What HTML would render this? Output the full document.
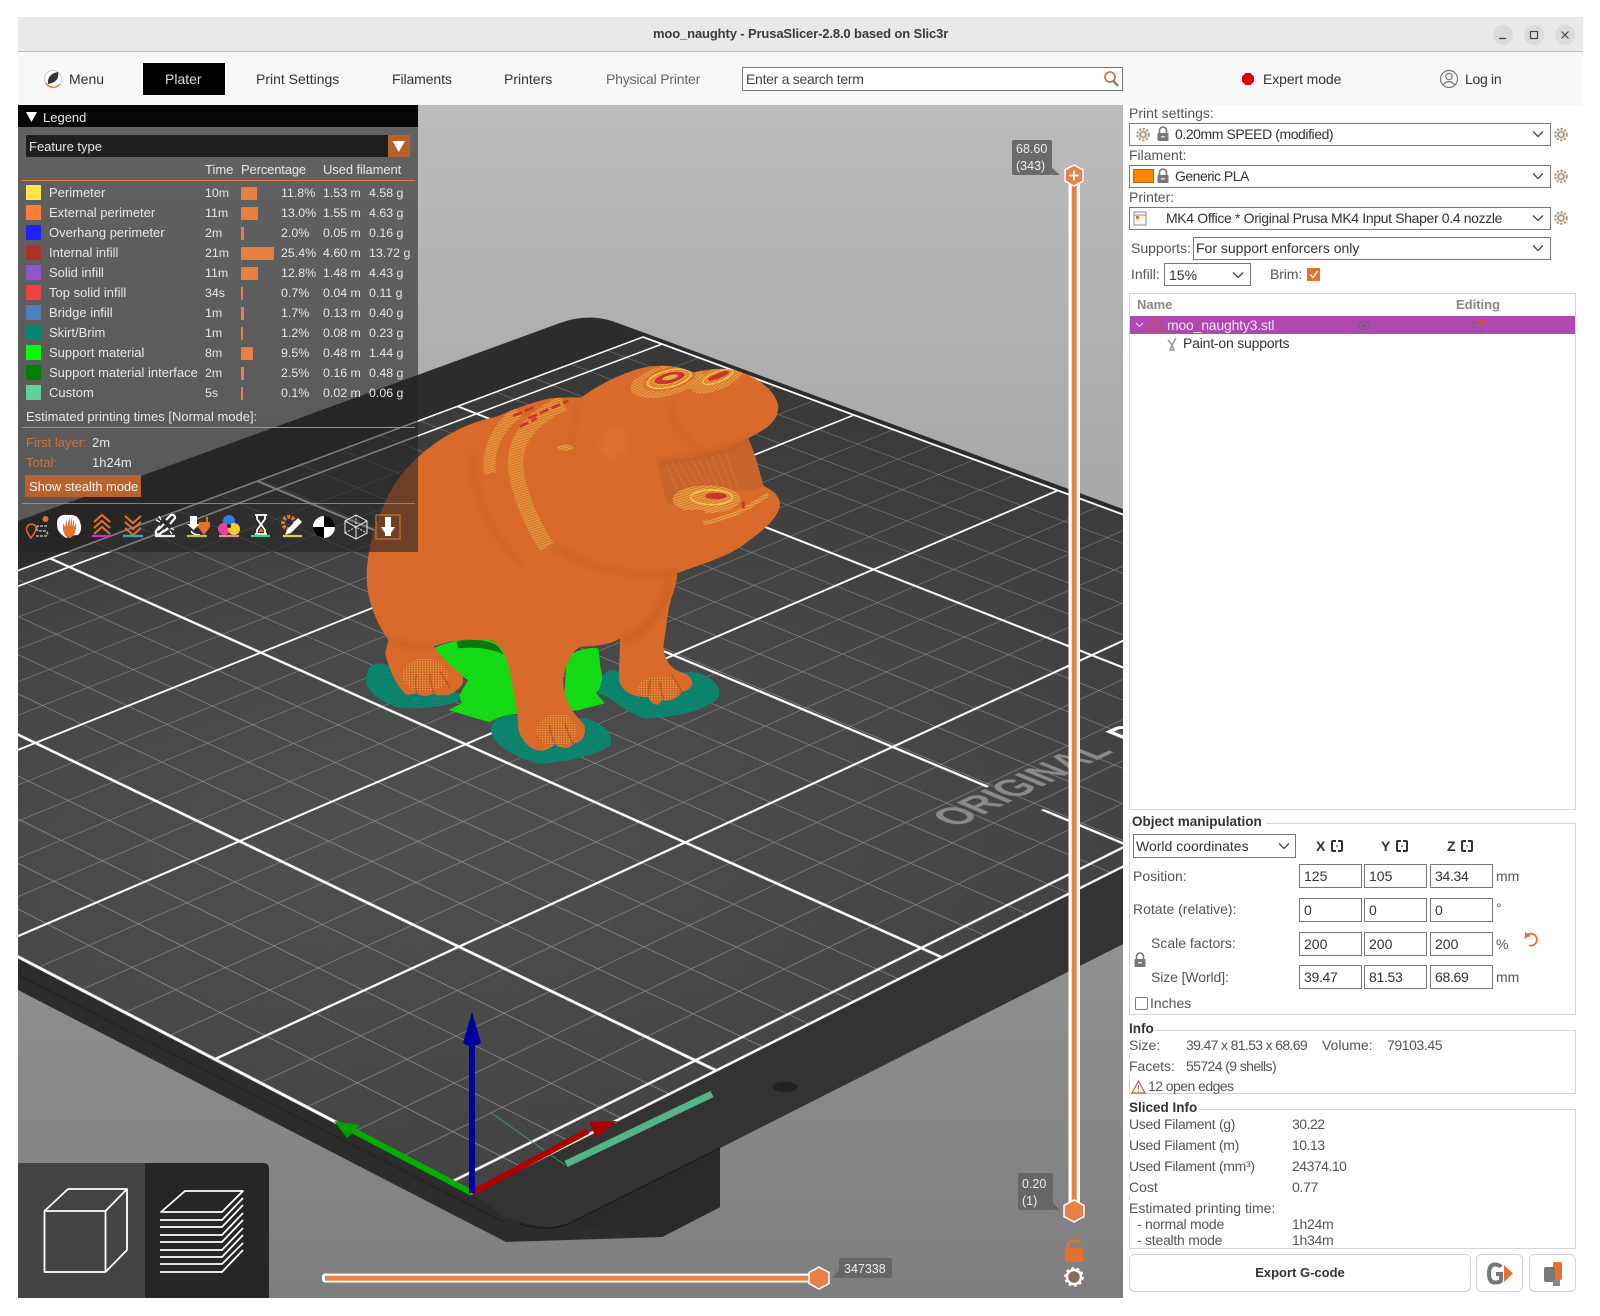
<!DOCTYPE html>
<html><head><meta charset="utf-8"><title>moo_naughty - PrusaSlicer</title>
<style>
html,body{margin:0;padding:0;width:1600px;height:1316px;background:#fff;overflow:hidden}
body{position:relative;font-family:"Liberation Sans",sans-serif;font-size:14px;color:#333}
.t{position:absolute;white-space:nowrap;line-height:16px}
.b{position:absolute;box-sizing:border-box}
.f{position:absolute;box-sizing:border-box;background:#fff;border:1px solid #777}
.l{color:#555}
#leg .t{color:#e8e8e8;font-size:13px}
#leg .t.n{font-size:12.4px}
#leg .b.sw{width:15px;height:15px;left:8px}
#leg .b.bar{background:#e8803f;height:13px;left:223px}
.g{position:absolute;border:1px solid #d4d4d4;box-sizing:border-box}
</style></head><body>

<!-- title + toolbar -->
<div class="b" style="left:18px;top:17px;width:1565px;height:35px;background:#e9e9e9;border-bottom:1px solid #bdbdbd"></div>
<div class="t" style="left:653px;top:26px;font-weight:bold;font-size:13px;letter-spacing:-.13px;color:#3a3a3a">moo_naughty - PrusaSlicer-2.8.0 based on Slic3r</div>
<div class="b" style="left:18px;top:52px;width:1565px;height:53px;background:#f8f8f8"></div>
<div class="b" style="left:143px;top:63px;width:82px;height:32px;background:#000"></div>
<div class="t" style="left:165px;top:71px;color:#ddd">Plater</div>
<div class="t" style="left:69px;top:71px">Menu</div>
<div class="t" style="left:256px;top:71px">Print Settings</div>
<div class="t" style="left:392px;top:71px;letter-spacing:-.1px">Filaments</div>
<div class="t" style="left:504px;top:71px">Printers</div>
<div class="t" style="left:606px;top:71px;color:#666;letter-spacing:-.2px">Physical Printer</div>
<div class="f" style="left:742px;top:67px;width:381px;height:24px"></div>
<div class="t" style="left:746px;top:71px;color:#444;letter-spacing:-.28px">Enter a search term</div>
<div class="t" style="left:1263px;top:71px;letter-spacing:-.1px">Expert mode</div>
<div class="t" style="left:1465px;top:71px;letter-spacing:-.3px">Log in</div>

<!-- 3D scene -->
<div class="b" style="left:18px;top:105px;width:1105px;height:1193px;overflow:hidden;background:linear-gradient(#bcbcbc,#7e7e7e)">
<div style="position:absolute;left:-18px;top:-105px;width:1600px;height:1316px">
<svg width="1600" height="1316" style="position:absolute;left:0;top:0">
 <path d="M18,521L560,323Q587,313 612,321L645,333L1123,509L1123,944L720,1148L720,1207L662,1237L506,1242L18,990Z" fill="#2c2c2c"/>
 <path d="M662,1237L720,1207L720,1180L662,1217Z" fill="#212121"/>
 <path d="M720,1148L568,1224Q548,1232 504,1217L662,1237L720,1207Z" fill="#2a2a2a"/>
 <path d="M472,1193L1123,866L1123,944L720,1148L568,1224Q548,1232 504,1217Z" fill="#333"/>
 <path d="M720,1148L568,1224Q548,1232 520,1224" fill="none" stroke="#1c1c1c" stroke-width="1.5"/>
 <path d="M18,975L504,1222" stroke="#252525" stroke-width="2" fill="none"/>
 <ellipse cx="785" cy="1087" rx="13" ry="5" fill="#222"/>
</svg>
<div style="position:absolute;left:0;top:0;width:2000px;height:2000px;transform-origin:0 0;transform:matrix3d(-0.478095,-0.16845,0,0.00008477,0.68401,-0.196445,0,0.000102495,0,0,1,0,472,1193,0,1)">
<svg width="2000" height="2000" style="display:block;overflow:visible">
 <defs>
  <radialGradient id="sf" cx="0.42" cy="0.28" r="0.85"><stop offset="0" stop-color="#505050"/><stop offset="0.55" stop-color="#444"/><stop offset="1" stop-color="#383838"/></radialGradient>
  <pattern id="thin" patternUnits="userSpaceOnUse" x="40.6" y="0" width="95.52" height="80"><path d="M0,0V80M0,0H95.52" stroke="#fff" stroke-opacity=".45" stroke-width="2.6" fill="none"/></pattern>
 </defs>
 <rect width="2000" height="2000" fill="url(#sf)"/>
 <rect width="2000" height="2000" fill="url(#thin)"/>
 <g stroke="#fff" stroke-width="5.5" fill="none">
  <path d="M0,0H2000V2000H0ZM40.6,0V2000M518.2,0V2000M995.8,0V2000M1473.4,0V2000M1951,0V2000"/>
  <path d="M0,400H2000M0,800H2000M0,1600H2000M0,1194H210M320,1194H2000"/>
 </g>
 <text transform="translate(262,1076) rotate(90)" font-family="Liberation Sans" font-weight="bold" font-size="82" fill="#8a8a8a" textLength="315" lengthAdjust="spacingAndGlyphs">ORIGINAL</text>
 <text transform="translate(262,1425) rotate(90)" font-family="Liberation Sans" font-weight="bold" font-size="82" fill="#fff" textLength="200" lengthAdjust="spacingAndGlyphs">PRUSA</text>
</svg>
</div>
<svg width="1600" height="1316" style="position:absolute;left:0;top:0">
 <defs>
  <pattern id="st" patternUnits="userSpaceOnUse" width="7" height="7" patternTransform="rotate(-18)"><rect width="7" height="7" fill="#db7430"/><rect width="7" height="3" fill="#e8ae44"/></pattern>
  <pattern id="dots" patternUnits="userSpaceOnUse" width="8" height="7"><circle cx="2" cy="2" r="1.8" fill="#eebc50"/><circle cx="6" cy="5.500" r="1.600" fill="#b7571f"/></pattern>
  <pattern id="sparse" patternUnits="userSpaceOnUse" width="9" height="9" patternTransform="rotate(-25)"><circle cx="2" cy="3" r="1.300" fill="#b9571f"/><circle cx="6" cy="7" r="1" fill="#e8a040"/></pattern>
  <pattern id="tl" patternUnits="userSpaceOnUse" width="6" height="6" patternTransform="rotate(8)"><rect width="6" height="6" fill="#0a7d68"/><rect width="6" height="1.600" fill="#0f947b"/></pattern>
  <pattern id="gr" patternUnits="userSpaceOnUse" width="8" height="8" patternTransform="rotate(-35)"><rect width="8" height="8" fill="#16e016"/><rect width="8" height="1.500" fill="#0cbc0c"/></pattern>
  <filter id="sb" x="-20%" y="-20%" width="140%" height="140%"><feGaussianBlur stdDeviation="9"/></filter>
  <clipPath id="bodyclip"><path d="M440,170C490,148 550,125 600,115C640,112 670,112 695,112C730,85 790,50 860,28C920,10 985,15 1030,38C1060,30 1100,24 1140,28C1210,40 1280,90 1285,140C1285,190 1240,210 1195,235C1215,280 1230,340 1240,375C1250,385 1285,395 1290,430C1290,470 1240,510 1200,540C1140,590 1060,610 980,640C985,650 975,680 960,730C950,770 950,800 940,860C945,900 960,930 1005,940C1040,960 1030,990 995,995C985,1020 950,1025 935,1020C930,1040 905,1040 895,1010C860,1015 820,1000 808,965C805,930 810,880 810,835C790,850 740,860 690,860C660,880 645,920 640,960C640,1020 665,1055 700,1090C715,1120 695,1150 670,1150C660,1170 625,1165 615,1150C610,1160 600,1165 580,1172C540,1175 515,1140 505,1110C505,1060 495,1010 480,940C470,880 450,850 420,840C360,835 300,840 250,860C270,885 300,915 325,935C345,950 345,975 320,990C300,1010 270,1010 250,1000C240,1010 215,1010 200,1000L170,1005C135,975 120,930 105,880L115,840C80,790 50,720 50,650C50,560 90,430 150,350C220,260 330,190 440,170Z"/></clipPath>
 </defs>
 <!-- wipe tower + axes -->
 <path d="M490,1112L565,1165" stroke="#3f8f70" stroke-width="1"/>
 <path d="M566,1164L712,1094" stroke="#53b488" stroke-width="7"/>
 <path d="M472,1193L588,1131" stroke="#b00000" stroke-width="6"/><path d="M617,1121L589,1122L596,1138Z" fill="#a80000"/>
 <path d="M472,1193L352,1130" stroke="#00b000" stroke-width="6"/><path d="M334,1121L347,1138L360,1125Z" fill="#00a000"/>
 <path d="M472,1193V1045" stroke="#00009c" stroke-width="6"/><path d="M472,1012L463,1043Q472,1049 481,1043Z" fill="#00009c"/>
 <!-- model -->
 <g transform="translate(350,360) scale(.33333)">
  <g fill="url(#tl)">
   <path d="M55,925C85,900 115,905 150,950L345,1005C330,1035 230,1050 150,1044C100,1030 35,990 50,950Z"/>
   <path d="M425,1095C450,1062 490,1060 520,1075L710,1075C760,1090 795,1125 780,1155C745,1185 650,1205 570,1212C500,1195 410,1150 425,1095Z"/>
   <path d="M745,960C770,930 795,918 815,945L1030,935C1080,945 1120,980 1105,1012C1070,1050 980,1072 885,1076C830,1060 790,1015 742,998Z"/>
  </g>
  <g fill="url(#gr)">
   <path d="M250,865C300,840 370,835 420,840C450,855 465,870 475,900L510,1062C470,1062 440,1072 420,1087L295,1050L335,1030L328,1005L355,960L330,945Z"/>
   <path d="M650,890C680,870 720,860 745,865L752,925C762,960 752,985 738,998L764,1030L680,1052L640,1050Z"/>
  </g>
  <path d="M320,845C360,835 420,838 445,860L462,885C430,865 370,860 325,865Z" fill="#0a780a"/>
  <path d="M440,170C490,148 550,125 600,115C640,112 670,112 695,112C730,85 790,50 860,28C920,10 985,15 1030,38C1060,30 1100,24 1140,28C1210,40 1280,90 1285,140C1285,190 1240,210 1195,235C1215,280 1230,340 1240,375C1250,385 1285,395 1290,430C1290,470 1240,510 1200,540C1140,590 1060,610 980,640C985,650 975,680 960,730C950,770 950,800 940,860C945,900 960,930 1005,940C1040,960 1030,990 995,995C985,1020 950,1025 935,1020C930,1040 905,1040 895,1010C860,1015 820,1000 808,965C805,930 810,880 810,835C790,850 740,860 690,860C660,880 645,920 640,960C640,1020 665,1055 700,1090C715,1120 695,1150 670,1150C660,1170 625,1165 615,1150C610,1160 600,1165 580,1172C540,1175 515,1140 505,1110C505,1060 495,1010 480,940C470,880 450,850 420,840C360,835 300,840 250,860C270,885 300,915 325,935C345,950 345,975 320,990C300,1010 270,1010 250,1000C240,1010 215,1010 200,1000L170,1005C135,975 120,930 105,880L115,840C80,790 50,720 50,650C50,560 90,430 150,350C220,260 330,190 440,170Z" fill="#d96a2c"/>
  <g clip-path="url(#bodyclip)">
   <!-- soft shading -->
   <g fill="none" stroke="#b8551f" filter="url(#sb)" opacity=".3">
    <path d="M370,280C365,420 430,530 520,620" stroke-width="16"/>
    <path d="M610,560C760,650 880,650 985,635" stroke-width="20"/>
    <path d="M960,650C940,760 880,830 810,840" stroke-width="30"/>
    <path d="M960,120C950,170 990,230 1060,270" stroke-width="12"/>
    <path d="M590,310C700,270 640,210 700,120" stroke-width="10"/>
    <path d="M110,840C160,860 220,860 260,855" stroke-width="20"/>
   </g>
   <!-- stippled wear on sides -->
   <path d="M430,300L590,300L650,580L500,590Z" fill="url(#sparse)" opacity=".4"/>
   <path d="M760,320L950,340L980,520L820,420Z" fill="url(#sparse)" opacity=".25"/>
   <!-- neck bands -->
   <g fill="none" stroke="url(#st)" opacity=".85">
    <path d="M505,155C450,195 410,260 420,340" stroke-width="36"/>
    <path d="M640,130C560,165 490,230 497,320C505,400 540,480 590,560" stroke-width="46"/>
   </g>
   <path d="M490,168L555,140M535,175L655,122M510,200L560,175" stroke="#c9352b" stroke-width="8" stroke-dasharray="28 10" fill="none"/>
   <!-- ear / eye -->
   <path d="M590,290C610,245 660,235 680,262C670,300 625,325 590,320Z" fill="#d96a2c"/>
   <ellipse cx="645" cy="263" rx="24" ry="9" fill="url(#st)"/>
   <ellipse cx="790" cy="250" rx="44" ry="44" fill="#dd6f31" filter="url(#sb)"/>
   <!-- head contours -->
   <g transform="rotate(-14 950 60)" fill="none">
    <ellipse cx="950" cy="62" rx="112" ry="46" fill="url(#st)" stroke="none" opacity=".9"/>
    <ellipse cx="958" cy="58" rx="78" ry="30" stroke="#d8702e" stroke-width="5"/>
    <ellipse cx="958" cy="58" rx="66" ry="25" stroke="#f0c44e" stroke-width="4"/>
    <ellipse cx="960" cy="56" rx="48" ry="17" fill="#c9352b" stroke="#f0c44e" stroke-width="2"/>
    <ellipse cx="962" cy="55" rx="24" ry="7" fill="#e8ad42"/>
   </g>
   <g transform="rotate(-22 1100 55)" fill="none">
    <ellipse cx="1100" cy="58" rx="84" ry="32" fill="url(#st)" opacity=".9"/>
    <ellipse cx="1105" cy="52" rx="48" ry="15" stroke="#f0c44e" stroke-width="4"/>
    <ellipse cx="1108" cy="50" rx="34" ry="8" fill="#c9352b"/>
   </g>
   <!-- mouth -->
   <path d="M925,305C1000,302 1110,285 1195,235C1210,280 1225,340 1242,378C1195,405 1120,395 1060,378C1005,380 972,410 958,445C935,385 925,340 925,305Z" fill="#c9642c"/>
   <g stroke="#dc8a48" stroke-width="3" opacity=".45">
    <path d="M945,305L985,395M965,305L1005,380M985,303L1025,375M1005,301L1045,372M1025,299L1065,372M1045,296L1085,378M1065,292L1105,382M1085,286L1125,385M1105,280L1145,388M1125,272L1165,388"/>
   </g>
   <path d="M925,303C1000,302 1110,285 1195,235" fill="none" stroke="#a94c1c" stroke-width="10" filter="url(#sb)" opacity=".5"/>
   <!-- lower jaw -->
   <path d="M958,440C985,385 1050,372 1110,385C1150,395 1200,400 1242,378C1262,395 1270,405 1262,418C1230,450 1130,490 1040,492C1000,500 980,500 965,490Z" fill="#d96a2c"/>
   <ellipse cx="1070" cy="418" rx="102" ry="42" fill="url(#st)"/>
   <ellipse cx="1085" cy="412" rx="62" ry="22" fill="none" stroke="#f0c44e" stroke-width="5"/>
   <ellipse cx="1098" cy="408" rx="32" ry="10" fill="#c9352b"/>
   <path d="M985,462C1000,445 1040,450 1060,450L1080,480C1040,490 1000,490 985,490Z" fill="#d96a2c"/>
   <path d="M1060,488C1120,480 1190,450 1255,402" stroke="url(#st)" stroke-width="14" fill="none"/>
   <path d="M1180,425V445" stroke="#c9352b" stroke-width="8"/>
   <!-- feet -->
   <ellipse cx="225" cy="945" rx="68" ry="50" fill="url(#dots)"/>
   <ellipse cx="620" cy="1110" rx="60" ry="50" fill="url(#dots)"/>
   <ellipse cx="925" cy="985" rx="62" ry="38" fill="url(#dots)"/>
   <g stroke="#a94c1c" stroke-width="4" fill="none" opacity=".7">
    <path d="M200,1000C195,980 195,960 200,945M252,1000C245,980 240,960 240,940M300,985C290,965 280,950 270,935"/>
    <path d="M615,1150C605,1130 600,1115 600,1095M668,1150C658,1125 650,1110 645,1090"/>
    <path d="M895,1010C895,990 900,975 900,960M940,1018C935,995 930,980 930,965M995,995C985,975 975,960 965,945"/>
   </g>
  </g>
 </g>
</svg>
</div>
</div>

<!-- Legend -->
<div id="leg" class="b" style="left:18px;top:127px;width:400px;height:425px;background:rgba(34,34,34,.59)">
 <div class="b" style="left:8px;top:8px;width:384px;height:22px;background:#1f1f1f"></div>
 <div class="b" style="left:370px;top:8px;width:22px;height:22px;background:#b5602f"></div>
 <div class="t" style="left:11px;top:12px">Feature type</div>
 <div class="t" style="left:187px;top:35px">Time</div><div class="t" style="left:223px;top:35px;letter-spacing:-.15px">Percentage</div><div class="t" style="left:305px;top:35px;letter-spacing:-.1px">Used filament</div>
 <div class="b" style="left:4px;top:53px;width:393px;height:1px;background:#e8803f"></div>

 <div class="b sw" style="top:58px;background:#ffe64d"></div><div class="t" style="left:31px;top:58px">Perimeter</div><div class="t n" style="left:187px;top:58px">10m</div><div class="b bar" style="top:60px;width:16px"></div><div class="t n" style="left:263px;top:58px">11.8%</div><div class="t n" style="left:305px;top:58px">1.53 m</div><div class="t n" style="left:351px;top:58px">4.58 g</div>
 <div class="b sw" style="top:78px;background:#ff7d38"></div><div class="t" style="left:31px;top:78px">External perimeter</div><div class="t n" style="left:187px;top:78px">11m</div><div class="b bar" style="top:80px;width:17px"></div><div class="t n" style="left:263px;top:78px">13.0%</div><div class="t n" style="left:305px;top:78px">1.55 m</div><div class="t n" style="left:351px;top:78px">4.63 g</div>
 <div class="b sw" style="top:98px;background:#1f1fff"></div><div class="t" style="left:31px;top:98px">Overhang perimeter</div><div class="t n" style="left:187px;top:98px">2m</div><div class="b bar" style="top:100px;width:3px"></div><div class="t n" style="left:263px;top:98px">2.0%</div><div class="t n" style="left:305px;top:98px">0.05 m</div><div class="t n" style="left:351px;top:98px">0.16 g</div>
 <div class="b sw" style="top:118px;background:#b03029"></div><div class="t" style="left:31px;top:118px">Internal infill</div><div class="t n" style="left:187px;top:118px">21m</div><div class="b bar" style="top:120px;width:33px"></div><div class="t n" style="left:263px;top:118px">25.4%</div><div class="t n" style="left:305px;top:118px">4.60 m</div><div class="t n" style="left:351px;top:118px">13.72 g</div>
 <div class="b sw" style="top:138px;background:#9654cc"></div><div class="t" style="left:31px;top:138px">Solid infill</div><div class="t n" style="left:187px;top:138px">11m</div><div class="b bar" style="top:140px;width:17px"></div><div class="t n" style="left:263px;top:138px">12.8%</div><div class="t n" style="left:305px;top:138px">1.48 m</div><div class="t n" style="left:351px;top:138px">4.43 g</div>
 <div class="b sw" style="top:158px;background:#f04040"></div><div class="t" style="left:31px;top:158px">Top solid infill</div><div class="t n" style="left:187px;top:158px">34s</div><div class="b bar" style="top:160px;width:2px"></div><div class="t n" style="left:263px;top:158px">0.7%</div><div class="t n" style="left:305px;top:158px">0.04 m</div><div class="t n" style="left:351px;top:158px">0.11 g</div>
 <div class="b sw" style="top:178px;background:#4d80ba"></div><div class="t" style="left:31px;top:178px">Bridge infill</div><div class="t n" style="left:187px;top:178px">1m</div><div class="b bar" style="top:180px;width:3px"></div><div class="t n" style="left:263px;top:178px">1.7%</div><div class="t n" style="left:305px;top:178px">0.13 m</div><div class="t n" style="left:351px;top:178px">0.40 g</div>
 <div class="b sw" style="top:198px;background:#00876e"></div><div class="t" style="left:31px;top:198px">Skirt/Brim</div><div class="t n" style="left:187px;top:198px">1m</div><div class="b bar" style="top:200px;width:2px"></div><div class="t n" style="left:263px;top:198px">1.2%</div><div class="t n" style="left:305px;top:198px">0.08 m</div><div class="t n" style="left:351px;top:198px">0.23 g</div>
 <div class="b sw" style="top:218px;background:#00ff00"></div><div class="t" style="left:31px;top:218px">Support material</div><div class="t n" style="left:187px;top:218px">8m</div><div class="b bar" style="top:220px;width:12px"></div><div class="t n" style="left:263px;top:218px">9.5%</div><div class="t n" style="left:305px;top:218px">0.48 m</div><div class="t n" style="left:351px;top:218px">1.44 g</div>
 <div class="b sw" style="top:238px;background:#008000"></div><div class="t" style="left:31px;top:238px">Support material interface</div><div class="t n" style="left:187px;top:238px">2m</div><div class="b bar" style="top:240px;width:3px"></div><div class="t n" style="left:263px;top:238px">2.5%</div><div class="t n" style="left:305px;top:238px">0.16 m</div><div class="t n" style="left:351px;top:238px">0.48 g</div>
 <div class="b sw" style="top:258px;background:#5ed29a"></div><div class="t" style="left:31px;top:258px">Custom</div><div class="t n" style="left:187px;top:258px">5s</div><div class="b bar" style="top:260px;width:2px"></div><div class="t n" style="left:263px;top:258px">0.1%</div><div class="t n" style="left:305px;top:258px">0.02 m</div><div class="t n" style="left:351px;top:258px">0.06 g</div>

 <div class="t" style="left:8px;top:282px">Estimated printing times [Normal mode]:</div>
 <div class="b" style="left:4px;top:300px;width:393px;height:1px;background:#e8803f"></div>
 <div class="t" style="left:8px;top:308px;color:#c8743e">First layer:</div><div class="t" style="left:74px;top:308px">2m</div>
 <div class="t" style="left:8px;top:328px;color:#c8743e">Total:</div><div class="t" style="left:74px;top:328px">1h24m</div>
 <div class="b" style="left:7px;top:348px;width:116px;height:22px;background:#b8622f"></div>
 <div class="t" style="left:11px;top:352px;color:#f2f2f2;letter-spacing:-.08px">Show stealth mode</div>
 <div class="b" style="left:4px;top:376px;width:393px;height:1px;background:#e8803f;opacity:.8"></div>
</div>
<div class="b" style="left:18px;top:105px;width:400px;height:22px;background:#060606"></div>
<div class="t" style="left:43px;top:110px;color:#e8e8e8;font-size:13px">Legend</div>

<!-- Right panel text -->
<div class="b" style="left:1123px;top:105px;width:459px;height:1193px;background:#fff;z-index:-1"></div>
<div class="t l" style="left:1129px;top:105px">Print settings:</div>
<div class="f" style="left:1129px;top:123px;width:422px;height:23px"></div>
<div class="t" style="left:1175px;top:126px;letter-spacing:-.43px">0.20mm SPEED (modified)</div>
<div class="t l" style="left:1129px;top:147px">Filament:</div>
<div class="f" style="left:1129px;top:165px;width:422px;height:23px"></div>
<div class="b" style="left:1133px;top:169px;width:21px;height:14px;background:#ff8400;border:1px solid #a86a20"></div>
<div class="t" style="left:1175px;top:168px;letter-spacing:-.5px">Generic PLA</div>
<div class="t l" style="left:1129px;top:189px">Printer:</div>
<div class="f" style="left:1129px;top:207px;width:422px;height:23px"></div>
<div class="t" style="left:1166px;top:210px;letter-spacing:-.35px">MK4 Office * Original Prusa MK4 Input Shaper 0.4 nozzle</div>
<div class="t l" style="left:1131px;top:240px">Supports:</div>
<div class="f" style="left:1193px;top:237px;width:358px;height:23px"></div>
<div class="t" style="left:1196px;top:240px">For support enforcers only</div>
<div class="t l" style="left:1131px;top:266px">Infill:</div>
<div class="f" style="left:1164px;top:263px;width:87px;height:23px"></div>
<div class="t" style="left:1169px;top:267px">15%</div>
<div class="t l" style="left:1270px;top:266px;letter-spacing:-.1px">Brim:</div>
<div class="b" style="left:1307px;top:268px;width:13px;height:13px;background:#e8702a"></div>

<div class="g" style="left:1129px;top:293px;width:447px;height:517px"></div>
<div class="t" style="left:1137px;top:297px;color:#888;font-weight:bold;font-size:13px">Name</div>
<div class="t" style="left:1456px;top:297px;color:#888;font-weight:bold;font-size:13px">Editing</div>
<div class="b" style="left:1130px;top:316px;width:445px;height:18px;background:#b048b0"></div>
<div class="t" style="left:1167px;top:317px;color:#f4e4f4;letter-spacing:-.2px">moo_naughty3.stl</div>
<div class="t" style="left:1183px;top:335px;letter-spacing:-.2px">Paint-on supports</div>

<div class="g" style="left:1129px;top:823px;width:447px;height:192px"></div>
<div class="t" style="left:1132px;top:814px;font-weight:bold;font-size:13.5px;background:#fff;padding-right:4px">Object manipulation</div>
<div class="f" style="left:1133px;top:834px;width:163px;height:24px"></div>
<div class="t" style="left:1136px;top:838px">World coordinates</div>
<div class="t" style="left:1316px;top:838px;font-weight:bold">X</div><div class="t" style="left:1381px;top:838px;font-weight:bold">Y</div><div class="t" style="left:1447px;top:838px;font-weight:bold">Z</div>
<div class="t l" style="left:1133px;top:868px">Position:</div>
<div class="f" style="left:1299px;top:864px;width:63px;height:24px"></div><div class="f" style="left:1364px;top:864px;width:63px;height:24px"></div><div class="f" style="left:1430px;top:864px;width:63px;height:24px"></div>
<div class="t" style="left:1304px;top:868px">125</div><div class="t" style="left:1369px;top:868px">105</div><div class="t" style="left:1435px;top:868px;letter-spacing:-.3px">34.34</div><div class="t l" style="left:1496px;top:868px">mm</div>
<div class="t l" style="left:1133px;top:901px">Rotate (relative):</div>
<div class="f" style="left:1299px;top:898px;width:63px;height:24px"></div><div class="f" style="left:1364px;top:898px;width:63px;height:24px"></div><div class="f" style="left:1430px;top:898px;width:63px;height:24px"></div>
<div class="t" style="left:1304px;top:902px">0</div><div class="t" style="left:1369px;top:902px">0</div><div class="t" style="left:1435px;top:902px">0</div><div class="t l" style="left:1496px;top:900px">°</div>
<div class="t l" style="left:1151px;top:935px">Scale factors:</div>
<div class="f" style="left:1299px;top:932px;width:63px;height:24px"></div><div class="f" style="left:1364px;top:932px;width:63px;height:24px"></div><div class="f" style="left:1430px;top:932px;width:63px;height:24px"></div>
<div class="t" style="left:1304px;top:936px">200</div><div class="t" style="left:1369px;top:936px">200</div><div class="t" style="left:1435px;top:936px">200</div><div class="t l" style="left:1496px;top:936px">%</div>
<div class="t l" style="left:1151px;top:969px;letter-spacing:-.1px">Size [World]:</div>
<div class="f" style="left:1299px;top:965px;width:63px;height:24px"></div><div class="f" style="left:1364px;top:965px;width:63px;height:24px"></div><div class="f" style="left:1430px;top:965px;width:63px;height:24px"></div>
<div class="t" style="left:1304px;top:969px;letter-spacing:-.3px">39.47</div><div class="t" style="left:1369px;top:969px;letter-spacing:-.3px">81.53</div><div class="t" style="left:1435px;top:969px;letter-spacing:-.3px">68.69</div><div class="t l" style="left:1496px;top:969px">mm</div>
<div class="b" style="left:1135px;top:997px;width:13px;height:13px;border:1px solid #777;border-radius:2px"></div>
<div class="t l" style="left:1150px;top:995px">Inches</div>

<div class="g" style="left:1129px;top:1030px;width:447px;height:64px"></div>
<div class="t" style="left:1129px;top:1021px;font-weight:bold;font-size:13.5px;background:#fff;padding-right:2px">Info</div>
<div class="t l" style="left:1129px;top:1037px;background:#fff">Size:</div><div class="t l" style="left:1186px;top:1037px;letter-spacing:-.65px">39.47 x 81.53 x 68.69</div><div class="t l" style="left:1322px;top:1037px">Volume:</div><div class="t l" style="left:1387px;top:1037px;letter-spacing:-.4px">79103.45</div>
<div class="t l" style="left:1129px;top:1058px;background:#fff">Facets:</div><div class="t l" style="left:1186px;top:1058px;letter-spacing:-.6px">55724 (9 shells)</div>
<div class="t l" style="left:1148px;top:1078px;letter-spacing:-.55px">12 open edges</div>

<div class="g" style="left:1129px;top:1109px;width:447px;height:140px"></div>
<div class="t" style="left:1129px;top:1100px;font-weight:bold;font-size:13.5px;background:#fff;padding-right:2px">Sliced Info</div>
<div class="t l" style="left:1129px;top:1116px;background:#fff;letter-spacing:-.3px">Used Filament (g)</div><div class="t l" style="left:1292px;top:1116px;letter-spacing:-.5px">30.22</div>
<div class="t l" style="left:1129px;top:1137px;background:#fff;letter-spacing:-.3px">Used Filament (m)</div><div class="t l" style="left:1292px;top:1137px;letter-spacing:-.5px">10.13</div>
<div class="t l" style="left:1129px;top:1158px;background:#fff;letter-spacing:-.3px">Used Filament (mm³)</div><div class="t l" style="left:1292px;top:1158px;letter-spacing:-.5px">24374.10</div>
<div class="t l" style="left:1129px;top:1179px;background:#fff">Cost</div><div class="t l" style="left:1292px;top:1179px;letter-spacing:-.3px">0.77</div>
<div class="t l" style="left:1129px;top:1200px;background:#fff">Estimated printing time:</div>
<div class="t l" style="left:1137px;top:1216px;letter-spacing:-.25px">- normal mode</div><div class="t l" style="left:1292px;top:1216px;letter-spacing:-.3px">1h24m</div>
<div class="t l" style="left:1137px;top:1232px;letter-spacing:-.25px">- stealth mode</div><div class="t l" style="left:1292px;top:1232px;letter-spacing:-.3px">1h34m</div>

<div class="b" style="left:1129px;top:1254px;width:342px;height:38px;border:1px solid #d2d2d2;border-radius:6px"></div>
<div class="t" style="left:1129px;top:1265px;width:342px;text-align:center;font-weight:bold;font-size:13px;color:#333">Export G-code</div>
<div class="b" style="left:1476px;top:1254px;width:47px;height:38px;border:1px solid #d2d2d2;border-radius:6px"></div>
<div class="b" style="left:1529px;top:1254px;width:47px;height:38px;border:1px solid #d2d2d2;border-radius:6px"></div>

<!-- tooltip labels -->
<div class="b" style="left:1012px;top:140px;width:40px;height:35px;background:#6a6a6a;border-radius:2px"></div>
<div class="t" style="left:1016px;top:141px;color:#eee;font-size:12.5px">68.60</div><div class="t" style="left:1016px;top:158px;color:#eee;font-size:12.5px">(343)</div>
<div class="b" style="left:1018px;top:1173px;width:35px;height:37px;background:#666;border-radius:2px"></div>
<div class="t" style="left:1022px;top:1176px;color:#eee;font-size:12.5px">0.20</div><div class="t" style="left:1022px;top:1193px;color:#eee;font-size:12.5px">(1)</div>
<div class="b" style="left:839px;top:1258px;width:53px;height:20px;background:#666;border-radius:2px"></div>
<div class="t" style="left:844px;top:1261px;color:#eee;font-size:12.5px">347338</div>

<!-- overlay icons -->
<svg width="1600" height="1316" style="position:absolute;left:0;top:0;pointer-events:none">
 <defs>
  <g id="gear"><circle r="5.800" fill="none" stroke="#a8917f" stroke-width="1.800" stroke-dasharray="2.400 1.400"/><circle r="4.200" fill="#c2b3a6"/><circle r="2.500" fill="#eee" stroke="#9a8a7c" stroke-width=".8"/></g>
  <g id="lock"><rect x="-5.500" y="-1" width="11" height="8" rx="1" fill="#777"/><path d="M-3.500,-1V-3.500A3.500,3.500 0 0 1 3.500,-3.500V-1" fill="none" stroke="#777" stroke-width="1.600"/><rect x="-2" y="2" width="4" height="1.500" fill="#ddd"/></g>
  <path id="chev" d="M-5,-2.500L0,2.500L5,-2.500" fill="none" stroke="#444" stroke-width="1.300"/>
  <g id="dim"><rect x="-5" y="-5" width="10" height="10" rx="1" fill="none" stroke="#333" stroke-width="2"/><path d="M0,-7V-3.500M0,3.500V7" stroke="#fff" stroke-width="2"/><circle r="1" fill="#777"/></g>
 </defs>
 <!-- window buttons -->
 <circle cx="1503" cy="35" r="10" fill="#dcdcdc"/><circle cx="1534" cy="35" r="10" fill="#dcdcdc"/><circle cx="1565" cy="35" r="10" fill="#dcdcdc"/>
 <path d="M1499,38.500h7" stroke="#444" stroke-width="1.300"/><rect x="1530.500" y="31.500" width="7" height="7" fill="none" stroke="#444" stroke-width="1.200"/><path d="M1561.500,31.500l7,7m0,-7l-7,7" stroke="#444" stroke-width="1.200"/>
 <!-- menu icon -->
 <circle cx="53" cy="79" r="8.500" fill="#fff" stroke="#ccc"/><path d="M48,84Q47,74 58,72Q60,82 48,84Z" fill="#333"/><path d="M46,83A8.500,8.500 0 0 0 60,84" fill="none" stroke="#e8702a" stroke-width="1.300"/>
 <!-- search -->
 <circle cx="1110" cy="77" r="5" fill="none" stroke="#d06a30" stroke-width="1.600"/><path d="M1113.500,81L1118,86" stroke="#777" stroke-width="2.200"/>
 <!-- expert -->
 <polygon points="1245.500,73 1250.500,73 1254,76.500 1254,81.500 1250.500,85 1245.500,85 1242,81.500 1242,76.500" fill="#e30000"/>
 <!-- login -->
 <circle cx="1449" cy="79" r="8.500" fill="none" stroke="#777" stroke-width="1.200"/><circle cx="1449" cy="76.500" r="3.200" fill="none" stroke="#777" stroke-width="1.200"/><path d="M1443,85Q1449,78 1455,85" fill="none" stroke="#777" stroke-width="1.200"/>
 <!-- legend triangles -->
 <path d="M26,112H37L31.500,122Z" fill="#fff"/>
 <path d="M392.500,141H405L398.700,152Z" fill="#fff"/>
 <!-- legend icons -->
 <g fill="none">
  <path d="M31,538Q25,530 27,527A5,5 0 0 1 36,527Q37,530 31,538Z" stroke="#e8702a" stroke-width="1.500"/><circle cx="45.500" cy="519" r="3" fill="#e8702a"/>
  <path d="M36,536H46Q49,533 46,531H38Q35,528 38,526H48" stroke="#aaa" stroke-width="1.600" stroke-dasharray="3 1"/>
  <path d="M58,518Q62,514 68,515Q78,514 80,522Q83,530 78,535Q72,535 66,538Q60,534 58,530Q56,524 58,518Z" fill="#fff"/>
  <path d="M63,523V530Q65,538 70,538Q75,536 76,528V523L74,527V518L72,527V516L70,527V517L67,527V519L65,527Z" fill="#e8702a"/>
  <path d="M94,522L102,515L110,522M94,528L102,521L110,528M94,534L102,527L110,534" stroke="#e8702a" stroke-width="2"/>
  <path d="M125,516L133,523L141,516M125,522L133,529L141,522M125,528L133,535L141,528" stroke="#e8702a" stroke-width="2"/>
  <path d="M158,530L164,524M166,520L171,515Q175,514 175,518L170,524M160,526L156,531Q155,535 159,535L164,530M168,528L163,532" stroke="#fff" stroke-width="2.200"/>
  <path d="M159,516l2,4M174,530l-3,-2M172,534l-2,-3M156,520l4,2" stroke="#fff" stroke-width="1.300"/>
 </g>
 <path d="M190,516H197V524H200L193.500,530L187,524H190Z" fill="#fff"/><path d="M199,522H206V517H208V522L210,522V527L204,535L198,527Z" fill="#e8702a"/>
 <path d="M191,531Q193,535 200,535" fill="none" stroke="#fff" stroke-width="1.500"/>
 <circle cx="229" cy="521" r="6" fill="#2f7fe0"/><circle cx="224" cy="529" r="6" fill="#e83fa0"/><circle cx="234" cy="529" r="6" fill="#eed030"/><circle cx="229" cy="526" r="2" fill="#222"/>
 <path d="M255,515H267M255,534H267M257,515V519L261,524.500L257,530V534M265,515V519L261,524.500L265,530V534" fill="none" stroke="#fff" stroke-width="1.800"/>
 <path d="M258,532H264L261,528Z" fill="#e8702a"/>
 <circle cx="289" cy="523" r="6" fill="none" stroke="#e8702a" stroke-width="4" stroke-dasharray="3 1.400"/>
 <path d="M285,535L287,530L298,518L302,522L291,533Z" fill="#fff"/>
 <circle cx="324" cy="527" r="11" fill="#fff"/><path d="M324,527V516A11,11 0 0 1 335,527ZM324,527V538A11,11 0 0 1 313,527Z" fill="#000"/>
 <g fill="none" stroke="#ddd" stroke-width="1.100"><path d="M356,515L367,521V533L356,539L345,533V521Z"/><path d="M345,521L356,527L367,521M356,527V539"/><path d="M345,533L356,527L367,533M356,515V527" stroke-dasharray="2 1.500"/></g>
 <rect x="376" y="515" width="24" height="24" fill="none" stroke="#d9803f" stroke-width="1"/>
 <path d="M385,517H391V527H395L391,533V536H385V533L381,527H385Z" fill="#fff"/>
 <g stroke-width="2.200">
  <path d="M92,536H111" stroke="#d030d0"/><path d="M123,536H143" stroke="#3aa3c8"/><path d="M155,536H175" stroke="#eee"/><path d="M187,536H207" stroke="#c5b94a"/><path d="M219,536H239" stroke="#e09090"/><path d="M251,536H270" stroke="#3fd07f"/><path d="M283,536H302" stroke="#e5d040"/>
 </g>
 <!-- bottom-left view switcher -->
 <path d="M18,1163H145V1298H18Z" fill="#444"/><path d="M145,1163H263Q269,1163 269,1169V1298H145Z" fill="#262626"/>
 <g fill="none" stroke="#fff" stroke-width="1.800" stroke-linejoin="round">
  <path d="M44.500,1211H105.500V1272H44.500ZM44.500,1211L68,1189H127L105.500,1211M127,1189V1250L105.500,1272"/>
  <path d="M161,1212L185,1191H243L222,1212Z"/>
  <path d="M160,1220H222L243,1198M160,1227H222L243,1205M160,1235H222L243,1213M160,1242H222L243,1220M160,1250H222L243,1228M160,1257H222L243,1235M160,1264H222L243,1243M160,1272H222L243,1250"/>
 </g>
 <!-- sliders -->
 <rect x="1068.500" y="175" width="11.500" height="1036" rx="3" fill="#fff"/><rect x="1071.700" y="175" width="5" height="1036" fill="#e8804a"/>
 <rect x="322" y="1273.500" width="497" height="9" rx="3" fill="#fff"/><rect x="325" y="1275.700" width="494" height="5" fill="#e8804a"/>
 <polygon points="1074,165 1083,170 1083,181 1074,186 1065,181 1065,170" fill="#e8804a" stroke="#fff" stroke-width="1.500"/><path d="M1074,170.500V180.500M1069,175.500H1079" stroke="#fff" stroke-width="1.800"/>
 <polygon points="1074,1200 1084,1205.500 1084,1216.500 1074,1222 1064,1216.500 1064,1205.500" fill="#e8804a" stroke="#fff" stroke-width="1.500"/>
 <polygon points="819,1267 829,1272.500 829,1283.500 819,1289 809,1283.500 809,1272.500" fill="#e8804a" stroke="#fff" stroke-width="1.500"/>
 <path d="M1052,175L1060,175L1052,168Z" fill="#6a6a6a"/><path d="M1053,1210H1060L1053,1203Z" fill="#666"/><path d="M839,1270L832,1278H839Z" fill="#666"/>
 <path d="M1066,1249H1082V1261H1066Z" fill="#e8702a" stroke="#e8702a" stroke-width="1.800"/><path d="M1068,1249V1244Q1074,1238 1081,1243" fill="none" stroke="#e8702a" stroke-width="2.500"/><circle cx="1074" cy="1254.500" r="1.500" fill="#888"/>
 <circle cx="1074" cy="1277" r="7" fill="#8a6a5a" stroke="#fff" stroke-width="2.500"/><circle cx="1074" cy="1277" r="9" fill="none" stroke="#fff" stroke-width="1.500" stroke-dasharray="3 2.600"/>
 <!-- combo decorations -->
 <use href="#gear" x="1143" y="134.500"/><use href="#lock" x="1163" y="134"/><use href="#lock" x="1163" y="176"/>
 <rect x="1134" y="212" width="12" height="13" fill="#fff" stroke="#888"/><path d="M1134,215h12" stroke="#888"/><rect x="1136" y="216" width="3" height="3" fill="#e8702a"/>
 <use href="#chev" x="1538" y="134"/><use href="#chev" x="1538" y="176"/><use href="#chev" x="1538" y="218"/><use href="#chev" x="1538" y="248"/><use href="#chev" x="1238" y="275"/><use href="#chev" x="1284" y="846"/>
 <use href="#gear" x="1561" y="134.500"/><use href="#gear" x="1561" y="176.500"/><use href="#gear" x="1561" y="218"/>
 <path d="M1310,274.500L1313,277.500L1317.500,271" fill="none" stroke="#fff" stroke-width="1.500"/>
 <!-- tree -->
 <path d="M1136,323L1139.500,326.500L1143,323" fill="none" stroke="#e8d0e8" stroke-width="1.100"/>
 <path d="M1155,318L1162,331H1148Z" fill="none" stroke="#c7503a" stroke-width="1.300"/>
 <ellipse cx="1364" cy="325.500" rx="6" ry="4" fill="none" stroke="#7a5a88" stroke-width="1.300"/><circle cx="1364" cy="325.500" r="1.700" fill="#7a5a88"/>
 <path d="M1472,323H1481V331H1473Z" fill="none" stroke="#7a5a88"/><circle cx="1481" cy="322" r="3" fill="#d2502a"/>
 <path d="M1168,340L1172,345L1176,338M1172,345L1170,350H1174L1172,345" fill="none" stroke="#999" stroke-width="1.500"/>
 <!-- object manipulation icons -->
 <use href="#dim" x="1337" y="846"/><use href="#dim" x="1402" y="846"/><use href="#dim" x="1467" y="846"/>
 <use href="#lock" x="1140" y="960"/>
 <path d="M1526,936A6,6 0 1 1 1526,944" fill="none" stroke="#e8702a" stroke-width="1.800" transform="rotate(-30 1530 939)"/><path d="M1525,932L1525,938L1531,936Z" fill="#e8702a"/>
 <!-- warning -->
 <path d="M1138.500,1081L1145,1093H1132Z" fill="none" stroke="#c7583a" stroke-width="1.200"/><path d="M1138.500,1085V1089M1138.500,1090.200V1091.500" stroke="#c7583a"/>
 <!-- buttons -->
 <path d="M1501,1267Q1499,1264.500 1495,1264.500Q1489,1264.500 1489,1273.500Q1489,1282.500 1495,1282.500Q1501,1282.500 1501,1280V1274H1496" fill="none" stroke="#777" stroke-width="4"/>
 <path d="M1504,1265L1513,1273.500L1504,1282Z" fill="#e8702a"/>
 <rect x="1553" y="1262" width="9" height="18" rx="2" fill="#e8702a"/><rect x="1544" y="1267" width="11" height="15" rx="2" fill="#777"/><rect x="1553" y="1280" width="7" height="6" fill="#888"/>
</svg>
</body></html>
